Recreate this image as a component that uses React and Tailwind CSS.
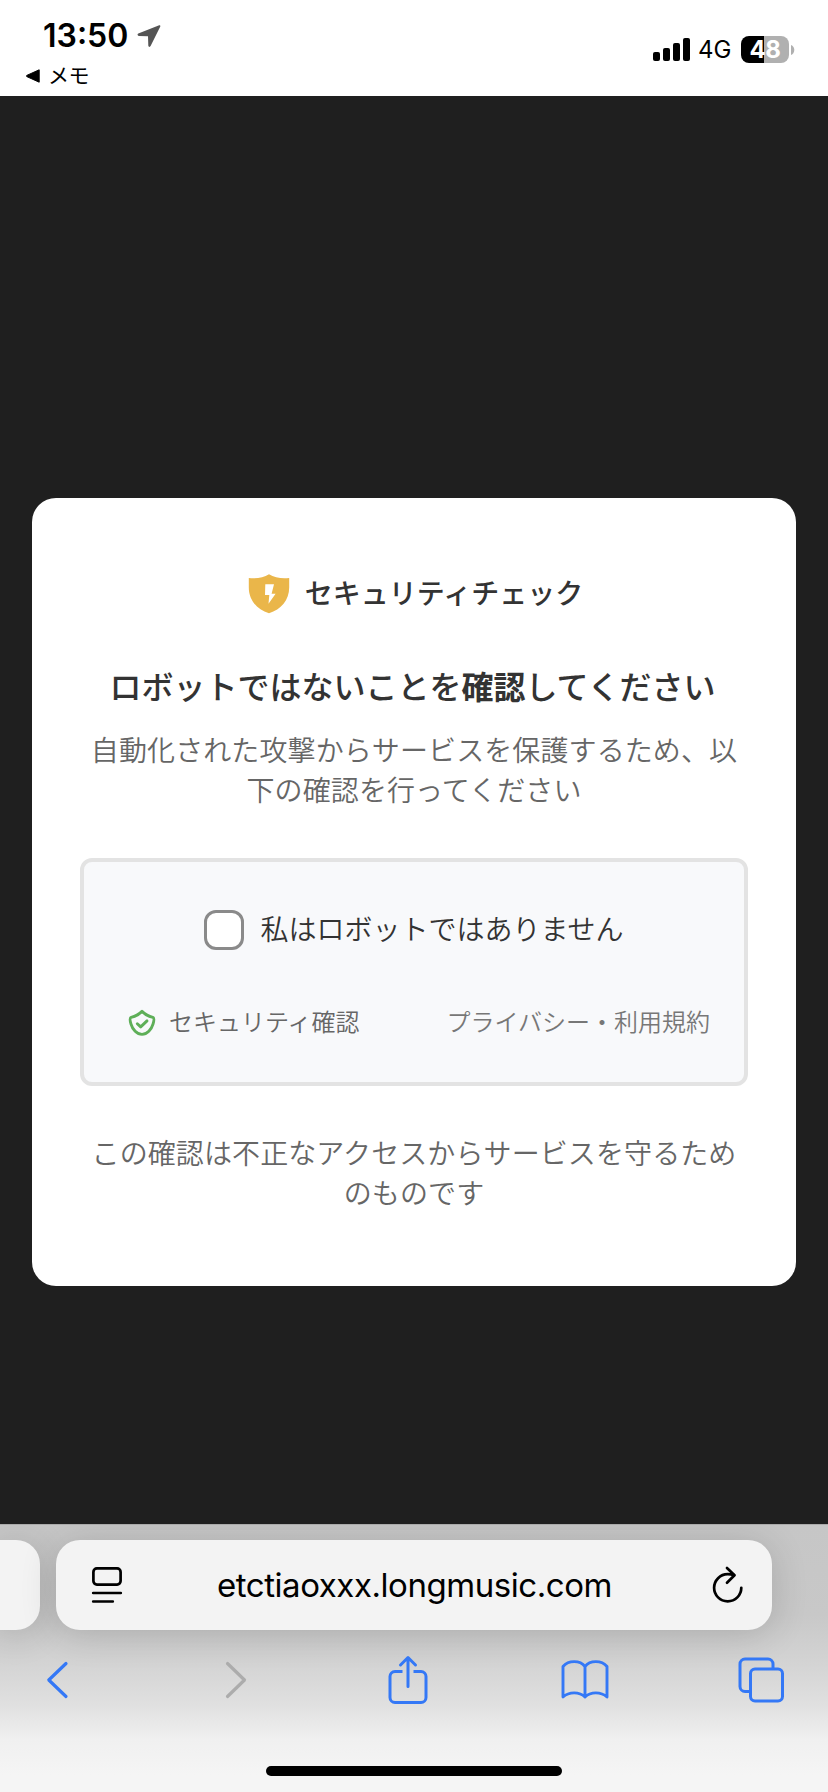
function StatusBar() {
  return (
    <header className="flex h-24 justify-between bg-white pl-[26px] pr-[33px] text-black">
      <div className="flex flex-col pt-4">
        <div className="flex h-10 items-center gap-[9px] pl-[17px]">
          <span className="text-[32px] leading-10 font-semibold">13:50</span>
          <svg width="24" height="24" viewBox="0 0 24 24" fill="#555" className="shrink-0">
            <path d="M22.2 1.2 1.3 9.6c-1.2.6-.9 2.2.5 2.3l9.2.3.3 9.4c.1 1.5 1.7 1.7 2.3.5L23.3 2.4c.3-.8-.3-1.5-1.1-1.2Z" />
          </svg>
        </div>
        <div className="mt-[6px] flex h-7 items-center gap-2">
          <svg width="14" height="14" viewBox="0 0 14 14">
            <path d="M13.2.8v12.4L.8 7.6a.7.7 0 0 1 0-1.2Z" stroke="#000" strokeLinejoin="round" />
          </svg>
          <span className="text-[21px] leading-7 tracking-[-0.6px]">メモ</span>
        </div>
      </div>

      <div className="mt-9 flex h-[27px] items-center">
        <svg width="38" height="24" viewBox="0 0 38 24" className="shrink-0">
          <rect x="0" y="14" width="7" height="9" rx="2" />
          <rect x="10" y="10" width="7" height="13" rx="2" />
          <rect x="20" y="5" width="7" height="18" rx="2" />
          <rect x="30" y="0" width="7" height="23" rx="2" />
        </svg>
        <span className="ml-[7px] w-[43px] text-[24px] leading-[27px] font-normal">4G</span>
        <div className="flex h-[27px] w-12 items-center justify-center rounded-[8px] bg-[linear-gradient(to_right,#000_23px,#b0b0b0_23px)]">
          <span className="text-[24px] leading-[27px] font-bold tracking-[-0.5px] text-white">48</span>
        </div>
        <svg width="4" height="10" viewBox="0 0 4 10" className="ml-[2px]" fill="#b0b0b0">
          <path d="M0 0c4.4 1.8 4.4 8.2 0 10Z" />
        </svg>
      </div>
    </header>
  )
}

function BoltShield() {
  return (
    <svg width="48" height="48" viewBox="0 0 48 48" className="shrink-0">
      <path d="M24 4.3C18.5 7.6 11.5 8.9 3.8 8v9.5C3.8 30 12 39.5 24 43.2 36 39.5 44.2 30 44.2 17.5V8C36.5 8.9 29.5 7.6 24 4.3Z" fill="#eab64a" />
      <path d="M20.3 14.3h8.7l-2.4 9.4h4L23.5 33.7l.8-8.6H20Z" fill="#fff" />
    </svg>
  )
}

function CheckShield() {
  return (
    <svg width="28" height="28" viewBox="0 0 28 28" className="shrink-0" fill="none" stroke="#5eaf58" strokeWidth="2.9" strokeLinecap="round" strokeLinejoin="round">
      <path d="M14 2.4C11.2 5.2 7 7.6 3.1 8.4 1.2 9 2.3 12.8 3 15.2 4.5 20.5 9 25.4 14 25.4S23.5 20.5 25 15.2C25.7 12.8 26.8 9 24.9 8.4 21 7.6 16.8 5.2 14 2.4Z" />
      <path d="m9.3 14.7 3.4 3.2 6.3-6" />
    </svg>
  )
}

function SecurityCard() {
  return (
    <section className="mx-8 flex h-[788px] flex-col items-center rounded-3xl bg-white px-12 pt-[72px]">
      <div className="flex items-center gap-3">
        <BoltShield />
        <p className="text-[28px] leading-[48px] font-medium text-[#333]">セキュリティチェック</p>
      </div>

      <h1 className="mt-[46px] mr-[3px] text-[32px] leading-[48px] font-medium whitespace-nowrap text-[#333]">
        ロボットではないことを<span className="font-bold">確認</span>してください
      </h1>
      <p className="mt-[19px] w-[650px] text-center text-[28px] leading-10 font-[350] tracking-[0.1px] text-[#666]">
        自動化された攻撃からサービスを保護するため、以下の確認を行ってください
      </p>

      <div className="mt-[47px] flex h-[228px] w-full flex-col rounded-xl border-4 border-[#e3e3e3] bg-[#f8f9fb] pt-12 pr-[34px] pl-11">
        <label className="flex items-center justify-center gap-4 pr-[10px]">
          <span className="h-10 w-10 rounded-xl border-3 border-[#8a8a8a] bg-white" />
          <span className="text-[28px] leading-10 font-[350] text-[#333]">私はロボットではありません</span>
        </label>
        <div className="mt-[55px] flex items-center justify-between text-[24px] leading-9 font-[350]">
          <span className="flex items-center gap-[13px] text-[#666]">
            <CheckShield />
            セキュリティ確認
          </span>
          <span className="text-[#777]">プライバシー・利用規約</span>
        </div>
      </div>

      <p className="mt-12 w-[650px] text-center text-[28px] leading-10 font-[350] tracking-[0.1px] text-[#666]">
        この確認は不正なアクセスからサービスを守るためのものです
      </p>
    </section>
  )
}

function AddressBar() {
  return (
    <div className="flex h-[90px] gap-4">
      <div className="w-10 rounded-r-3xl bg-[#f3f3f3] shadow-[0_4px_36px_rgba(0,0,0,0.16)]" />
      <div className="flex w-[716px] items-center rounded-3xl bg-[#f3f3f3] pr-[27px] pl-[35px] shadow-[0_4px_36px_rgba(0,0,0,0.16)]">
        <svg width="32" height="38" viewBox="0 0 32 38" fill="none" stroke="#000" strokeWidth="2.7" strokeLinecap="round">
          <rect x="2.4" y="2.4" width="27.2" height="16.2" rx="3.5" />
          <path d="M2.2 27h27.6M2.2 35.5h19.6" />
        </svg>
        <span className="mr-[5px] flex-1 text-center text-[33px] leading-10 tracking-[-0.44px] text-black">
          etctiaoxxx.longmusic.com
        </span>
        <svg width="34" height="40" viewBox="0 0 34 40" fill="none" stroke="#000" strokeWidth="2.7" strokeLinecap="round" strokeLinejoin="round">
          <path d="M30.3 22.8A13.6 13.6 0 1 1 16.7 9.2c2.5 0 4.3.3 6.3.9" />
          <path d="M16 3l7.5 7.2L16 17.8" />
        </svg>
      </div>
    </div>
  )
}

function Toolbar() {
  return (
    <nav className="mt-5 flex h-[60px] items-center justify-between pr-[43px] pl-[33px]">
      <span className="flex w-12 justify-center">
        <svg width="25" height="40" viewBox="0 0 25 40" fill="none" stroke="#3478f6" strokeWidth="3.2" strokeLinecap="round" strokeLinejoin="round">
          <path d="M21 3.5 3.8 20 21 36.5" />
        </svg>
      </span>
      <span className="flex w-12 justify-center pl-2">
        <svg width="25" height="40" viewBox="0 0 25 40" fill="none" stroke="#acacac" strokeWidth="3.2" strokeLinecap="round" strokeLinejoin="round">
          <path d="M3.5 3.5 20.5 20 3.5 36.5" />
        </svg>
      </span>
      <span className="flex w-12 justify-center">
        <svg width="42" height="50" viewBox="0 0 42 50" fill="none" stroke="#3478f6" strokeWidth="3" strokeLinecap="round" strokeLinejoin="round">
          <path d="M15.5 16.5H8a5 5 0 0 0-5 5v21a5 5 0 0 0 5 5h26a5 5 0 0 0 5-5v-21a5 5 0 0 0-5-5h-7.5" strokeLinecap="butt" />
          <path d="M21 31.5V3M13.5 10 21 2.5l7.5 7.5" />
        </svg>
      </span>
      <svg width="50" height="42" viewBox="0 0 50 42" fill="none" stroke="#3478f6" strokeWidth="2.9" strokeLinecap="round" strokeLinejoin="round">
        <path d="M25 7.5C20 1 8.5 1 3 7.5V38c6-5.5 16.5-5.5 22 0 5.5-5.5 16-5.5 22 0V7.5C41.5 1 30 1 25 7.5ZM25 7.5V38" />
      </svg>
      <svg width="48" height="46" viewBox="0 0 48 46" fill="none" stroke="#3478f6" strokeWidth="3">
        <path d="M12.5 34.5H8a5 5 0 0 1-5-5V7a5 5 0 0 1 5-5h23a5 5 0 0 1 5 5v4.5" />
        <rect x="13.5" y="12" width="32" height="32" rx="4.5" />
      </svg>
    </nav>
  )
}

export default function App() {
  return (
    <div className="flex h-[1792px] w-[828px] flex-col overflow-hidden bg-[#1f1f1f] font-['Inter','Noto_Sans_CJK_JP',sans-serif]">
      <StatusBar />
      <main className="h-[1428px] shrink-0 pt-[402px]">
        <SecurityCard />
      </main>
      <footer className="flex h-[268px] shrink-0 flex-col overflow-hidden border-t border-[#aaa] bg-[linear-gradient(to_bottom,#c6c6c6_0px,#c8c8c8_90px,#d4d4d4_140px,#e0e0e0_180px,#f0f0f0_215px,#f5f5f5_250px)] pt-[15px]">
        <AddressBar />
        <Toolbar />
        <div className="mt-14 h-[10px] w-[296px] shrink-0 self-center rounded-full bg-black" />
      </footer>
    </div>
  )
}
